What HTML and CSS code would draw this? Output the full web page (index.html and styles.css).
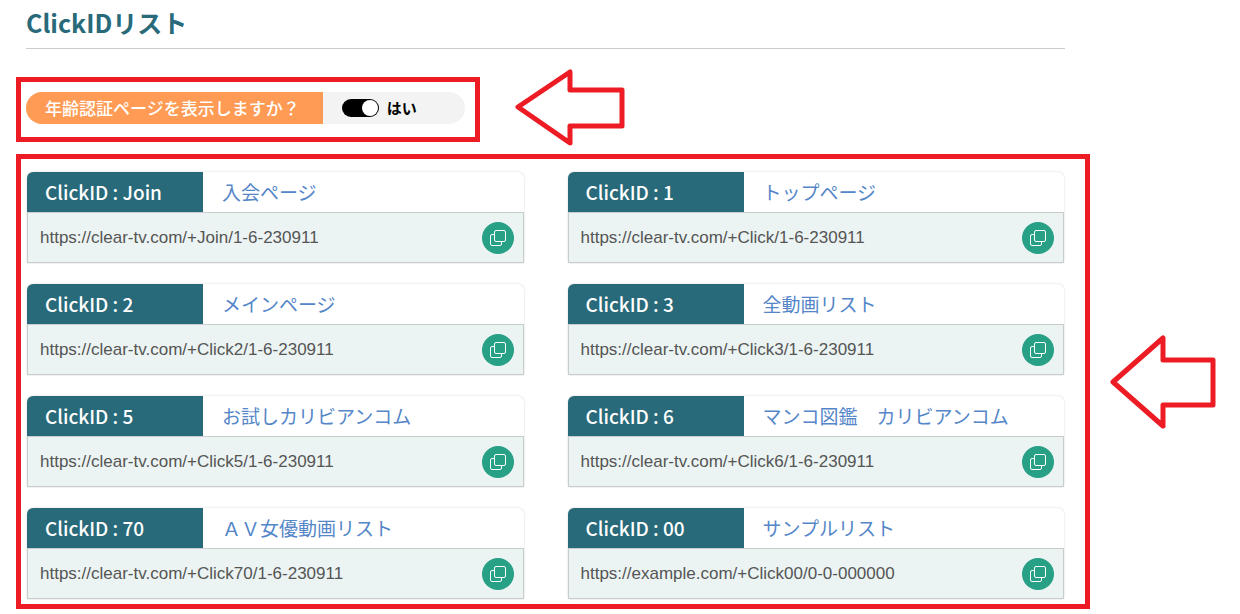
FILE: index.html
```html
<!DOCTYPE html>
<html lang="ja">
<head>
<meta charset="utf-8">
<title>ClickIDリスト</title>
<link rel="stylesheet" href="styles.css">
</head>
<body>
<svg class="sprite" aria-hidden="true">
  <symbol id="copy" viewBox="0 0 18 18">
    <rect x="5.500" y="1.500" width="11" height="11" rx="1.500"/>
    <path d="M5.500 5.500H3Q1.500 5.500 1.500 7V15Q1.500 16.500 3 16.500H11Q12.500 16.500 12.500 15V12.500"/>
  </symbol>
</svg>
<main class="page">
  <h1 class="title">ClickIDリスト</h1>
  <div class="setting-row">
    <div class="frame setting-frame">
      <div class="setting">
        <label class="setting-label" for="age-check">年齢認証ページを表示しますか？</label>
        <span class="setting-value">
          <input class="switch" id="age-check" type="checkbox" role="switch" checked>
          <span>はい</span>
        </span>
      </div>
    </div>
    <svg class="arrow arrow-small" viewBox="0 0 110 77" aria-hidden="true"><path d="M3 38L55 3V21H107V57H55V74Z"/></svg>
  </div>
  <div class="list-row">
    <section class="frame list">
      <article class="card">
        <div class="card-head"><h2 class="card-id">ClickID : Join</h2><a class="card-name" href="#">入会ページ</a></div>
        <div class="card-body"><span>https://clear-tv.com/+Join/1-6-230911</span><button class="copy" type="button" aria-label="コピー"><svg class="copy-icon"><use href="#copy"/></svg></button></div>
      </article>
      <article class="card">
        <div class="card-head"><h2 class="card-id">ClickID : 1</h2><a class="card-name" href="#">トップページ</a></div>
        <div class="card-body"><span>https://clear-tv.com/+Click/1-6-230911</span><button class="copy" type="button" aria-label="コピー"><svg class="copy-icon"><use href="#copy"/></svg></button></div>
      </article>
      <article class="card">
        <div class="card-head"><h2 class="card-id">ClickID : 2</h2><a class="card-name" href="#">メインページ</a></div>
        <div class="card-body"><span>https://clear-tv.com/+Click2/1-6-230911</span><button class="copy" type="button" aria-label="コピー"><svg class="copy-icon"><use href="#copy"/></svg></button></div>
      </article>
      <article class="card">
        <div class="card-head"><h2 class="card-id">ClickID : 3</h2><a class="card-name" href="#">全動画リスト</a></div>
        <div class="card-body"><span>https://clear-tv.com/+Click3/1-6-230911</span><button class="copy" type="button" aria-label="コピー"><svg class="copy-icon"><use href="#copy"/></svg></button></div>
      </article>
      <article class="card">
        <div class="card-head"><h2 class="card-id">ClickID : 5</h2><a class="card-name" href="#">お試しカリビアンコム</a></div>
        <div class="card-body"><span>https://clear-tv.com/+Click5/1-6-230911</span><button class="copy" type="button" aria-label="コピー"><svg class="copy-icon"><use href="#copy"/></svg></button></div>
      </article>
      <article class="card">
        <div class="card-head"><h2 class="card-id">ClickID : 6</h2><a class="card-name" href="#">マンコ図鑑　カリビアンコム</a></div>
        <div class="card-body"><span>https://clear-tv.com/+Click6/1-6-230911</span><button class="copy" type="button" aria-label="コピー"><svg class="copy-icon"><use href="#copy"/></svg></button></div>
      </article>
      <article class="card">
        <div class="card-head"><h2 class="card-id">ClickID : 70</h2><a class="card-name" href="#">ＡＶ女優動画リスト</a></div>
        <div class="card-body"><span>https://clear-tv.com/+Click70/1-6-230911</span><button class="copy" type="button" aria-label="コピー"><svg class="copy-icon"><use href="#copy"/></svg></button></div>
      </article>
      <article class="card">
        <div class="card-head"><h2 class="card-id">ClickID : 00</h2><a class="card-name" href="#">サンプルリスト</a></div>
        <div class="card-body"><span>https://example.com/+Click00/0-0-000000</span><button class="copy" type="button" aria-label="コピー"><svg class="copy-icon"><use href="#copy"/></svg></button></div>
      </article>
    </section>
    <svg class="arrow arrow-large" viewBox="0 0 106 96" aria-hidden="true"><path d="M3 48L53 4V26H103V71H53V92Z"/></svg>
  </div>
</main>
</body>
</html>
```

FILE: styles.css
```css
* { box-sizing: border-box; }
body {
  margin: 0;
  background: #fff;
  color: #000;
  font-family: "Noto Sans CJK JP", "Noto Sans", sans-serif;
}
.sprite { display: block; width: 0; height: 0; }
.page { padding: 0 24px 4px 16px; }
.title {
  margin: 0 151px 20px 10px;
  padding-bottom: 4px;
  border-bottom: 1px solid #ccc;
  color: #286a7a;
  font-size: 25px;
  font-weight: 700;
  line-height: 44px;
}
.frame { border: 5px solid #ed1c24; }
.setting-row { display: flex; align-items: center; gap: 35px; }
.setting-frame { margin-top: 4px; padding: 10px 10px 13px 5px; }
.setting {
  display: flex;
  border-radius: 16px;
  background: #f3f3f3;
  overflow: hidden;
  line-height: 32px;
}
.setting-label {
  padding: 0 23px 0 19px;
  background: #ff9b54;
  color: #fff;
  font-size: 17px;
  font-weight: 500;
}
.setting-value {
  display: flex;
  align-items: center;
  gap: 8px;
  padding: 0 48px 0 19px;
  font-size: 15px;
  font-weight: 700;
}
.switch {
  appearance: none;
  display: flex;
  justify-content: flex-end;
  width: 37px;
  height: 18px;
  margin: 0;
  padding: 1px;
  border-radius: 9px;
  background: #000;
}
.switch::before {
  content: "";
  width: 16px;
  border-radius: 50%;
  background: #fff;
}
.switch:not(:checked) { justify-content: flex-start; }
.arrow {
  flex: none;
  fill: none;
  stroke: #ed1c24;
  stroke-width: 5px;
  stroke-linejoin: round;
}
.arrow-small { width: 110px; height: 77px; }
.arrow-large { width: 106px; height: 96px; }
.list-row { display: flex; align-items: center; gap: 20px; margin-top: 8px; }
.list {
  display: grid;
  flex: 1;
  grid-template-columns: 1fr 1fr;
  gap: 21px 44px;
  padding: 13px 21px 5px 6px;
}
.card {
  border-radius: 6px 6px 2px 2px;
  box-shadow: 0 0 2px rgba(0, 0, 0, 0.2);
}
.card-head { display: flex; line-height: 40px; }
.card-id {
  width: 176px;
  margin: 0;
  padding-left: 18px;
  border-radius: 6px 0 0 0;
  background: #286a7a;
  color: #fff;
  font-size: 19px;
  font-weight: 500;
}
.card-name {
  padding-left: 19px;
  color: #5586c8;
  font-size: 19px;
  text-decoration: none;
}
.card-body {
  display: flex;
  align-items: center;
  justify-content: space-between;
  padding: 9px 9px 8px 12px;
  border: 1px solid #c8cccc;
  background: #ebf4f3;
  color: #555;
  font-family: "Liberation Sans", Arial, sans-serif;
  font-size: 17px;
}
.copy {
  display: flex;
  align-items: center;
  justify-content: center;
  width: 32px;
  height: 32px;
  padding: 0;
  border: 0;
  border-radius: 50%;
  background: #27a086;
}
.copy-icon {
  width: 18px;
  height: 18px;
  fill: none;
  stroke: #fff;
  stroke-width: 1px;
}
```
